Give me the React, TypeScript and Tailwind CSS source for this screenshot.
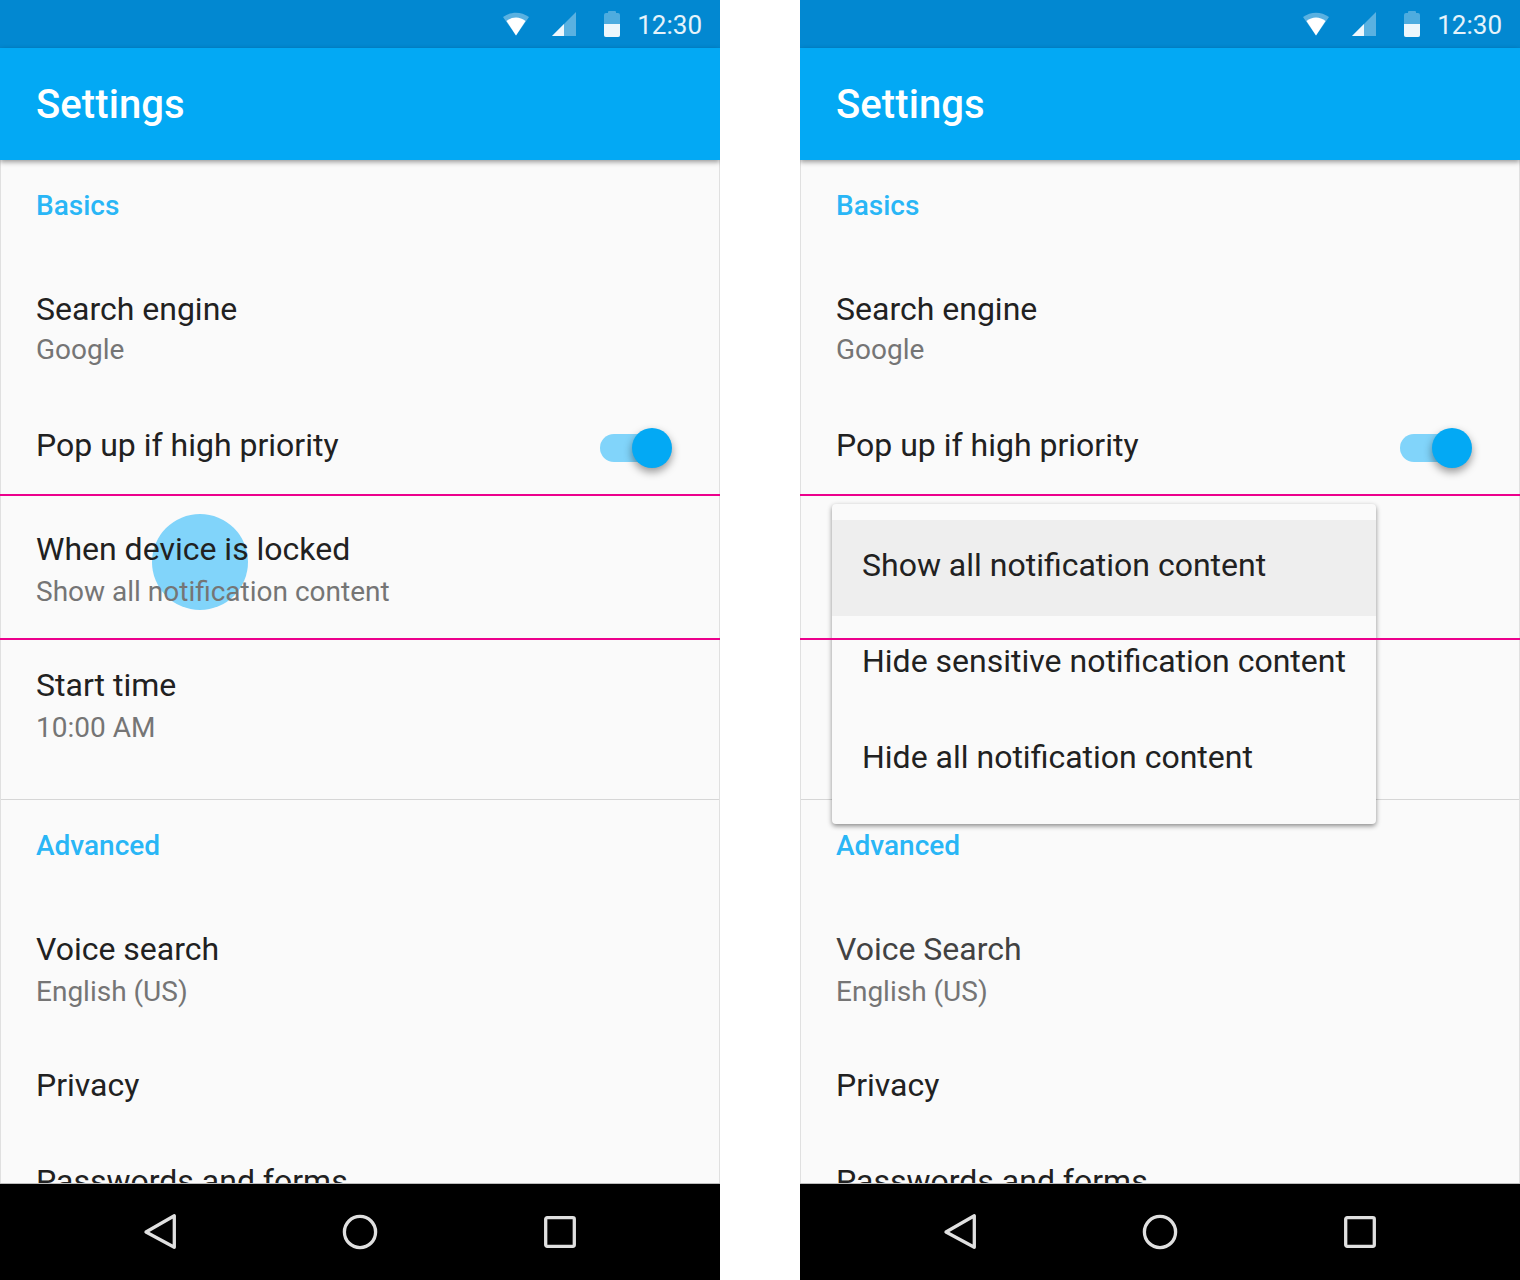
const font = "font-['Roboto',sans-serif]";

function StatusBar() {
  return (
    <div className="flex h-12 shrink-0 items-center justify-end bg-[#0288d1] pr-[18px]">
      <svg width="28" height="24" viewBox="0 0 28 24" className="mr-[22px]">
        <path d="M1 5 C9 -0.700 19 -0.700 27 5 L14 23.500 Z" fill="#fff" fillOpacity="0.35" />
        <path d="M4.500 9 C10 4.200 18 4.200 23.500 9 L14 23.500 Z" fill="#fff" />
      </svg>
      <svg width="24" height="24" viewBox="0 0 24 24" className="mr-[28px]">
        <path d="M24 0 V24 H0 Z" fill="#fff" fillOpacity="0.35" />
        <path d="M12 12 V24 H0 Z" fill="#fff" fillOpacity="0.9" />
      </svg>
      <svg width="16" height="26" viewBox="0 0 16 26" className="mr-[17px]">
        <path d="M4 1 A1 1 0 0 1 5 0 H11 A1 1 0 0 1 12 1 V2 H14 A2 2 0 0 1 16 4 V24 A2 2 0 0 1 14 26 H2 A2 2 0 0 1 0 24 V4 A2 2 0 0 1 2 2 H4 Z" fill="#fff" fillOpacity="0.3" />
        <path d="M0 13 H16 V24 A2 2 0 0 1 14 26 H2 A2 2 0 0 1 0 24 Z" fill="#fff" fillOpacity="0.9" />
      </svg>
      <span className="pt-0.5 text-[26px] leading-none text-white/90">12:30</span>
    </div>
  );
}

function NavBar() {
  return (
    <div className="relative z-10 flex h-[97px] shrink-0 items-center justify-between border-t border-[#bdbdbd] bg-black px-[140px]">
      <svg width="40" height="40" viewBox="0 0 40 40">
        <path d="M34.300 3.800 V35.300 L6 20 Z" fill="none" stroke="#e0e0e0" strokeWidth="3.300" strokeLinejoin="round" />
      </svg>
      <svg width="40" height="40" viewBox="0 0 40 40">
        <circle cx="20" cy="20" r="15.600" fill="none" stroke="#e0e0e0" strokeWidth="3.300" />
      </svg>
      <svg width="40" height="40" viewBox="0 0 40 40">
        <rect x="5.700" y="5.700" width="28.600" height="28.600" rx="1.500" fill="none" stroke="#e0e0e0" strokeWidth="3.300" />
      </svg>
    </div>
  );
}

function SectionTitle({ children, className }: { children: string; className: string }) {
  return <div className={`pl-[35px] text-[28px] leading-8 font-medium text-[#29b6f6] ${className}`}>{children}</div>;
}

function Row({ title, sub, height, titleClass = "text-[#212121]", subClass = "mt-[3px]" }: { title: string; sub?: string; height: string; titleClass?: string; subClass?: string }) {
  return (
    <div className={`pl-[35px] ${height}`}>
      <div className={`text-[32px] leading-10 ${titleClass}`}>{title}</div>
      {sub && <div className={`text-[28px] leading-10 text-[#757575] ${subClass}`}>{sub}</div>}
    </div>
  );
}

function Phone({ menu, voice, ripple }: { menu?: boolean; voice: string; ripple?: boolean }) {
  return (
    <div className="relative flex h-[1280px] w-[720px] shrink-0 flex-col overflow-hidden bg-[#fafafa]">
      <StatusBar />
      <div className="relative z-10 flex h-28 shrink-0 items-center bg-[#03a9f4] pl-9 shadow-[0_2px_5px_rgba(0,0,0,0.4)]">
        <span className="pt-0.5 text-[40px] leading-none font-medium tracking-[0.1px] text-white">Settings</span>
      </div>
      <div className="min-h-0 flex-1 overflow-hidden border-x border-[#e0e0e0]">
        <div className="border-b border-[#d6d6d6]">
          <SectionTitle className="pt-[30px] pb-[67px]">Basics</SectionTitle>
          <Row title="Search engine" sub="Google" height="h-[136px]" subClass="mt-[1px]" />
          <div className="flex h-[104px] items-start justify-between pr-[47px]">
            <Row title="Pop up if high priority" height="h-10" />
            <div className="relative mt-[9px] h-7 w-[72px]">
              <div className="absolute top-0 left-0 h-7 w-[60px] rounded-full bg-[#81d4fa]" />
              <div className="absolute top-[-6px] right-0 h-10 w-10 rounded-full bg-[#03a9f4] shadow-[0_4px_8px_rgba(0,0,0,0.4)]" />
            </div>
          </div>
          <div className="relative h-[136px]">
            {ripple && <div className="absolute top-[-15px] left-[151px] h-24 w-24 rounded-full bg-[#81d4fa]" />}
            <div className="relative">
              <Row title="When device is locked" sub="Show all notification content" height="h-[136px]" />
            </div>
          </div>
          <Row title="Start time" sub="10:00 AM" height="h-[134px]" />
        </div>
        <SectionTitle className="pt-[30px] pb-[67px]">Advanced</SectionTitle>
        <Row title={voice} sub="English (US)" height="h-[136px]" titleClass={menu ? "text-[#424242]" : "text-[#212121]"} />
        <Row title="Privacy" height="h-[96px]" />
        <Row title="Passwords and forms" height="h-10" />
      </div>
      <NavBar />
      {menu && (
        <div className="absolute top-[504px] left-8 h-80 w-[544px] rounded-[4px] bg-[#fafafa] pt-4 text-[32px] leading-10 text-[#212121] shadow-[0_2px_5px_rgba(0,0,0,0.45)]">
          {["Show all notification content", "Hide sensitive notification content", "Hide all notification content"].map((item, i) => (
            <div key={item} className={`h-24 pt-[25px] pl-[30px] whitespace-nowrap ${i === 0 ? "bg-[#eeeeee]" : ""}`}>{item}</div>
          ))}
        </div>
      )}
      <div className="absolute inset-x-0 top-[494px] h-0.5 bg-[#ec008c]" />
      <div className="absolute inset-x-0 top-[638px] h-0.5 bg-[#ec008c]" />
    </div>
  );
}

export default function App() {
  return (
    <div className={`flex h-[1280px] w-[1520px] gap-20 bg-white ${font}`}>
      <Phone voice="Voice search" ripple />
      <Phone voice="Voice Search" menu />
    </div>
  );
}
